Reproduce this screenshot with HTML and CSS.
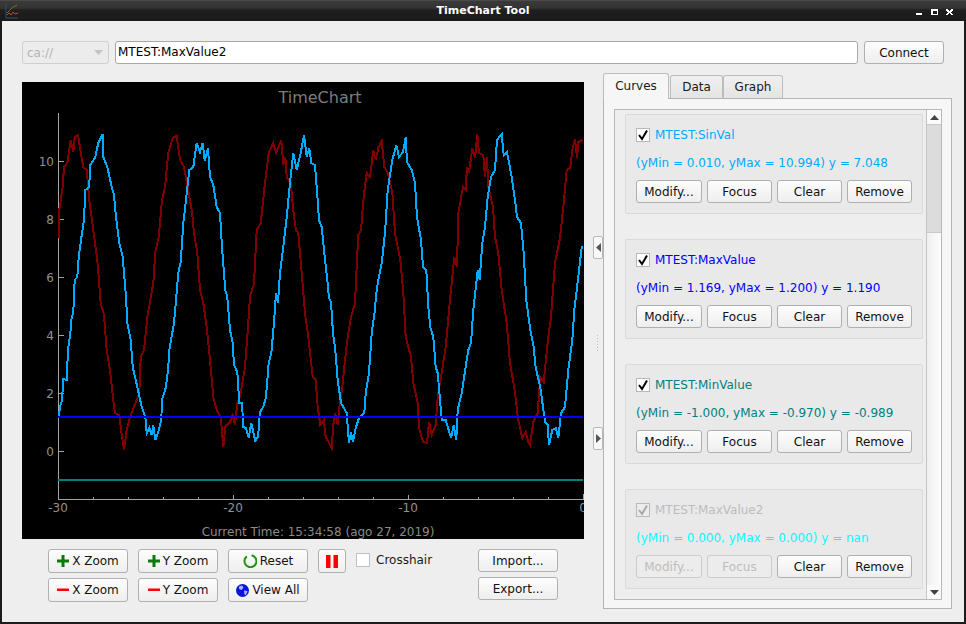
FILE: index.html
```html
<!DOCTYPE html>
<html lang="en">
<head>
<meta charset="utf-8">
<title>TimeChart Tool</title>
<link rel="stylesheet" href="styles.css">
</head>
<body>
<div class="window">
  <header class="titlebar">
    <div class="tb-left">
      <svg class="appicon" width="16" height="18" viewBox="0 0 16 18">
        <path d="M3 1V16H15" fill="none" stroke="#34506a" stroke-width="1"/>
        <path d="M4 11L7 8L10 5L14 3" fill="none" stroke="#7a6a30" stroke-width="1"/>
        <path d="M4 13L6 11L8 13L10 10L12 12L15 11" fill="none" stroke="#b0502a" stroke-width="1"/>
      </svg>
    </div>
    <div class="tb-title">TimeChart Tool</div>
    <div class="tb-right">
      <svg width="44" height="10" viewBox="0 0 44 10" shape-rendering="crispEdges">
        <path d="M0 7H6V9H0Z" fill="#fff"/>
        <path d="M15 3H22V9H15ZM16.500 5V8H20.500V5Z" fill="#fff" fill-rule="evenodd"/>
        <path d="M30 3H32V4H33V5H34V4H35V3H37V5H36V6H35V7H36V8H37V9H35V8H34V7H33V8H32V9H30V8H31V7H32V6H31V5H30Z" fill="#fff"/>
      </svg>
    </div>
  </header>
  <main class="content">
    <div class="toprow">
      <div class="combo"><span>ca://</span><svg width="9" height="5" viewBox="0 0 9 5"><path d="M0 0H9L4.500 5Z" fill="#c4c4c4"/></svg></div>
      <div class="lineedit">MTEST:MaxValue2</div>
      <button class="btn connect">Connect</button>
    </div>
    <div class="mainrow">
      <section class="leftcol">
        <svg class="chart" width="562" height="457" viewBox="22 82 562 457">
          <rect x="22" y="82" width="562" height="457" fill="#000"/>
          <text class="c-title" x="320" y="103" text-anchor="middle">TimeChart</text>
          <text class="c-foot" x="318" y="536" text-anchor="middle">Current Time: 15:34:58 (ago 27, 2019)</text>
          <g class="c-axis" shape-rendering="crispEdges">
            <path d="M58.500 113V499.500H584"/>
            <path d="M58 161.500H64M58 219.500H64M58 277.500H64M58 335.500H64M58 393.500H64M58 451.500H64"/>
            <path d="M93.500 497V499M128.500 497V499M163.500 497V499M198.500 497V499M233.500 495V499M268.500 497V499M303.500 497V499M338.500 497V499M373.500 497V499M408.500 495V499M443.500 497V499M478.500 497V499M513.500 497V499M548.500 497V499M583.500 494V499"/>
          </g>
          <g class="c-label" text-anchor="end">
            <text x="54" y="166">10</text>
            <text x="54" y="224">8</text>
            <text x="54" y="282">6</text>
            <text x="54" y="340">4</text>
            <text x="54" y="398">2</text>
            <text x="54" y="456">0</text>
          </g>
          <g class="c-label" text-anchor="middle">
            <text x="58" y="512">-30</text>
            <text x="233" y="512">-20</text>
            <text x="408" y="512">-10</text>
            <text x="583" y="512">0</text>
          </g>
          <g fill="none" stroke-width="2" shape-rendering="crispEdges">
            <polyline class="c-red" points="58.700,238 59.300,210 62.700,187 64,167 67.300,163 70.700,140 73.300,152 74.700,137 78,135 80.700,152 83.300,167 86.700,170 89.300,200 93.300,230 97.300,260 100.700,303 104,315 106.700,350 110,370 113.300,400 115,413 119.300,415 122,437 124,450 126.700,430 130,417 134,407 139.300,393 140.700,357 144,350 147.300,317 150,302 153.300,283 155.300,252 158.700,237 162,200 165,187 168.300,153 172.700,138 176.700,136 180,160 184,167 188.700,193 192,212 194,233 197.300,253 200,290 203.300,303 206.700,327 210,360 213.300,397 216.700,410 220.700,417 223.300,447 225.300,427 230,422 232.700,415 235,425 237.300,403 240,397 245,367 247.300,337 250,297 254,283 256.700,230 260.700,223 265,183 268.700,153 273.300,143 276,153 281.300,140 283.300,165 285.300,157 286.700,177 290.700,183 294,217 296,230 298.300,233 301.700,273 305,313 308.300,337 312.700,377 315.700,380 317.700,407 320.300,425 323.700,420 325.700,437 329,443 331.700,448 333.300,425 335,413 337.700,425 339,410 342.300,387 345,360 347.700,337 351,317 355,303 357,260 358.300,235 361,230 363.700,197 366.700,173 370,177 373.300,150 375.700,160 378.300,148 381.700,141 384.300,167 387.700,173 392.300,192 395,233 400.300,260 403.300,293 405.700,337 411,357 413.300,383 417.700,403 419,428 423,442 427,443 429,422 431.700,435 435.700,425 437.700,397 441.700,373 445.700,347 448.300,318 451,290 454.300,257 457,267 458.300,213 463,187 465.700,190 467,167 469,173 472.300,148 475,158 477.300,134 479,153 483.300,155 485,177 487,157 488.300,187 493,207 495,237 498.300,253 501.700,290 506.700,323 510,363 515,392 517.700,417 522.300,438 525.700,432 528.300,442 530,445 533.300,422 537.700,413 540.300,377 543.700,382 548.300,337 551,317 555,263 560,238 563.300,207 566.700,170 570.300,168 572.300,150 575,139 577,158 578.300,142 582.300,140"/>
            <polyline class="c-sky" points="58.700,416.700 60,407 62,400 63.300,379 66.700,380 68,350 70.700,330 71.300,320 73.300,312 74.700,280 77.300,277 78.700,257 82,233 84,220 85.300,190 89.300,187 90,165 95,158 98.300,143 102.700,134 103.300,157 107.300,167 111.700,187 114,195 116,217 119.300,243 122.700,257 126,297 127.300,323 130.700,340 132.700,367 137.300,387 141.700,407 145.300,417 146.700,433 149.300,428 151.700,435 153.300,425 155.300,440 158.300,432 161.300,420 162,400 166,387 168.300,367 169.300,350 174,323 176,300 178.300,273 180.700,262 183.300,223 186,200 189.300,170 193.300,167 196.700,143 200,152 202.700,143 204.700,161 208,148 210,177 213.300,185 216.700,207 220,213 222,247 225.300,290 227.300,297 230,330 232.700,343 234,365 237.300,372 239.300,403 242,403 243.300,427 246,428 248.700,438 251.300,423 255.300,441 258,437 260,412 263.300,407 266,397 268.700,363 271.300,353 274,323 276,293 278,303 280,273 283.300,247 286.700,217 290,183 293.300,153 296.700,170 300.700,153 304,135 306.700,157 309.300,148 311.300,163 315,165 317.700,200 319,220 321.700,227 324.300,253 327,277 329,298 331,302 333,333 335,347 337.700,380 341,403 346.700,413 349,443 351,432 353,442 355.700,428 359,418 364.300,413 365.700,393 369,373 371.700,333 375,310 376,295 378.300,280 381.700,263 385,233 387.700,190 392.300,160 396.300,145 399,157 403,152 405.700,137 407,162 411.700,170 415,183 417,217 421,240 423,267 426.300,270 428.300,307 430.300,327 433.300,337 435.700,367 437.700,373 441.700,420 445.700,420 451,438 453.700,425 456.300,440 457.700,410 461.700,393 466.700,360 468.300,350 471,343 473.300,310 477.700,270 479.700,280 482.300,243 485,227 487.700,197 491,177 495,170 497,140 501.700,134 503.700,155 507,152 511.700,177 515,200 517,217 521,223 523.700,253 526.300,300 530.300,330 533.700,347 535.700,368 540.300,387 545,422 547.700,425 549,445 552.300,430 555.700,428 558.300,438 561,413 565,407 568.300,370 572.300,340 574.300,310 578.300,277 581.700,247 583,247"/>
            <path class="c-blue" d="M58 416.500H583"/>
            <path class="c-teal" d="M58 480H583"/>
          </g>
        </svg>
        <div class="controls">
          <div class="zoomgrid">
            <button class="btn tool"><svg class="ic" width="12" height="12" viewBox="0 0 12 12"><path d="M4.500 0H7.500V4.500H12V7.500H7.500V12H4.500V7.500H0V4.500H4.500Z" fill="#0a7a0a"/></svg>X Zoom</button>
            <button class="btn tool"><svg class="ic" width="12" height="12" viewBox="0 0 12 12"><path d="M4.500 0H7.500V4.500H12V7.500H7.500V12H4.500V7.500H0V4.500H4.500Z" fill="#0a7a0a"/></svg>Y Zoom</button>
            <button class="btn tool"><svg class="ic" width="14" height="14" viewBox="0 0 14 14"><path d="M8.600 1.300A6 6 0 1 1 3.800 2.400" fill="none" stroke="#1c9414" stroke-width="2"/></svg>Reset</button>
            <button class="btn tool"><svg class="ic" width="12" height="12" viewBox="0 0 12 12"><path d="M0 4.500H12V7H0Z" fill="#f00"/></svg>X Zoom</button>
            <button class="btn tool"><svg class="ic" width="12" height="12" viewBox="0 0 12 12"><path d="M0 4.500H12V7H0Z" fill="#f00"/></svg>Y Zoom</button>
            <button class="btn tool"><svg class="ic" width="13" height="13" viewBox="0 0 13 13"><circle cx="6.500" cy="6.500" r="6.500" fill="#0a14e0"/><path d="M3 2.500L6 1.500L7.500 3.500L5.500 6L3 5ZM8 6.500L11.500 7L10 11L8.500 10.500Z" fill="#a8b4f4"/></svg>View All</button>
          </div>
          <button class="btn pause"><svg width="12" height="13" viewBox="0 0 12 13"><path d="M0 0H4.500V13H0ZM7.500 0H12V13H7.500Z" fill="#f00"/></svg></button>
          <label class="crosshair"><span class="box"></span>Crosshair</label>
          <div class="iogroup">
            <button class="btn io">Import...</button>
            <button class="btn io">Export...</button>
          </div>
        </div>
      </section>
      <div class="splitter">
        <div class="handle handle-a"><svg width="5" height="9" viewBox="0 0 5 9"><path d="M5 0V9L0 4.500Z" fill="#555"/></svg></div>
        <div class="grip"></div>
        <div class="handle handle-b"><svg width="5" height="9" viewBox="0 0 5 9"><path d="M0 0V9L5 4.500Z" fill="#555"/></svg></div>
      </div>
      <section class="rightcol">
        <div class="tabs">
          <div class="tab active">Curves</div>
          <div class="tab t-data">Data</div>
          <div class="tab t-graph">Graph</div>
        </div>
        <div class="pane">
          <div class="scrollarea">
            <div class="curvelist">
              <div class="curve">
                <div class="curvehead"><span class="box checked"><svg width="12" height="12" viewBox="0 0 12 12"><path d="M2 6L5 10L10 1.500" fill="none" stroke="#000" stroke-width="2"/></svg></span><span class="name sin">MTEST:SinVal</span></div>
                <div class="vals sin">(yMin = 0.010, yMax = 10.994) y = 7.048</div>
                <div class="actions"><button class="btn act">Modify...</button><button class="btn act">Focus</button><button class="btn act">Clear</button><button class="btn act">Remove</button></div>
              </div>
              <div class="curve">
                <div class="curvehead"><span class="box checked"><svg width="12" height="12" viewBox="0 0 12 12"><path d="M2 6L5 10L10 1.500" fill="none" stroke="#000" stroke-width="2"/></svg></span><span class="name max">MTEST:MaxValue</span></div>
                <div class="vals max">(yMin = 1.169, yMax = 1.200) y = 1.190</div>
                <div class="actions"><button class="btn act">Modify...</button><button class="btn act">Focus</button><button class="btn act">Clear</button><button class="btn act">Remove</button></div>
              </div>
              <div class="curve">
                <div class="curvehead"><span class="box checked"><svg width="12" height="12" viewBox="0 0 12 12"><path d="M2 6L5 10L10 1.500" fill="none" stroke="#000" stroke-width="2"/></svg></span><span class="name min">MTEST:MinValue</span></div>
                <div class="vals min">(yMin = -1.000, yMax = -0.970) y = -0.989</div>
                <div class="actions"><button class="btn act">Modify...</button><button class="btn act">Focus</button><button class="btn act">Clear</button><button class="btn act">Remove</button></div>
              </div>
              <div class="curve">
                <div class="curvehead"><span class="box checked off"><svg width="12" height="12" viewBox="0 0 12 12"><path d="M2 6L5 10L10 1.500" fill="none" stroke="#a8a8a8" stroke-width="2"/></svg></span><span class="name disabled">MTEST:MaxValue2</span></div>
                <div class="vals cyan">(yMin = 0.000, yMax = 0.000) y = nan</div>
                <div class="actions"><button class="btn act off">Modify...</button><button class="btn act off">Focus</button><button class="btn act">Clear</button><button class="btn act">Remove</button></div>
              </div>
            </div>
            <div class="scrollbar">
              <div class="sb-btn"><svg width="9" height="5" viewBox="0 0 9 5"><path d="M0 5H9L4.500 0Z" fill="#444"/></svg></div>
              <div class="sb-thumb"></div>
              <div class="sb-track"></div>
              <div class="sb-btn"><svg width="9" height="5" viewBox="0 0 9 5"><path d="M0 0H9L4.500 5Z" fill="#444"/></svg></div>
            </div>
          </div>
        </div>
      </section>
    </div>
  </main>
</div>
</body>
</html>
```
FILE: styles.css
```css
* { box-sizing: border-box; }
html, body { margin: 0; padding: 0; }
body { width: 966px; height: 624px; overflow: hidden; font-family: "DejaVu Sans", sans-serif; font-size: 12px; color: #1a1a1a; }
.window { width: 966px; height: 624px; display: flex; flex-direction: column; background: #1c1c1c; padding: 0 2px 2px; }
.titlebar { height: 21px; margin: 0 -2px; display: grid; grid-template-columns: 1fr auto 1fr; align-items: center; background: linear-gradient(#5a5a5a 0, #3a3a3a 1px, #333 8px, #1f1f1f 10px, #1a1a1a 21px); color: #fff; font-size: 11px; font-weight: bold; }
.tb-left { display: flex; padding-left: 3px; }
.tb-right { display: flex; justify-content: flex-end; padding-right: 6px; padding-top: 1px; }
.tb-title { position: relative; }
.content { flex: 1; background: #eeeeee; padding: 20px 12px 0 20px; display: flex; flex-direction: column; }
.toprow { display: flex; gap: 6px; height: 23px; margin-right: 8px; margin-bottom: 9px; }
.combo { width: 87px; border: 1px solid #cfcfcf; border-radius: 3px; background: #ececec; color: #b4b4b4; display: flex; align-items: center; justify-content: space-between; padding: 0 5px 0 4px; }
.lineedit { flex: 1; border: 1px solid #a8a8a8; border-radius: 3px; background: #fff; color: #000; padding: 0 2px; line-height: 21px; }
.btn { font: inherit; color: #111; padding: 0; border: 1px solid #b0b0b0; border-radius: 3px; background: linear-gradient(#fdfdfd, #eeeeee); display: flex; align-items: center; justify-content: center; }
.connect { width: 80px; }
.mainrow { display: flex; height: 536px; }
.leftcol { width: 562px; padding-top: 9px; display: flex; flex-direction: column; }
.chart { display: block; }
.c-title { font-size: 16px; fill: #7c7c7c; }
.c-foot { font-size: 12px; fill: #8a8a8a; }
.c-label { font-size: 12px; fill: #929292; }
.c-axis path { fill: none; stroke: #a4a4a4; stroke-width: 1; }
.c-red { stroke: #800000; }
.c-sky { stroke: #00aaff; }
.c-blue { stroke: #0000ff; }
.c-teal { stroke: #008080; }
.controls { display: flex; align-items: flex-start; margin-top: 10px; padding-left: 26px; padding-right: 26px; }
.zoomgrid { display: grid; grid-template-columns: repeat(3, 80px); grid-auto-rows: 24px; gap: 5px 10px; }
.tool { gap: 2px; }
.ic { flex: none; margin-right: 1px; }
.pause { width: 28px; height: 24px; margin-left: 10px; }
.crosshair { display: flex; align-items: center; gap: 6px; margin-left: 10px; margin-top: 4px; height: 13px; }
.box { display: flex; align-items: center; justify-content: center; flex: none; width: 14px; height: 14px; background: #fff; border: 1px solid #c2c2c2; }
.iogroup { margin-left: auto; display: flex; flex-direction: column; gap: 5px; }
.io { width: 80px; height: 23px; }
.splitter { width: 19px; display: flex; flex-direction: column; align-items: flex-end; padding-top: 163px; }
.handle { width: 10px; height: 23px; border: 1px solid #b8b8b8; border-radius: 2px; background: #f8f8f8; display: flex; align-items: center; justify-content: center; }
.grip { width: 1px; height: 16px; margin: 76px 5px 76px 0; background: repeating-linear-gradient(#bcbcbc 0, #bcbcbc 1px, transparent 1px, transparent 3px); }
.rightcol { width: 349px; display: flex; flex-direction: column; }
.tabs { display: flex; align-items: flex-end; height: 25px; position: relative; }
.tab { height: 23px; margin-left: 1px; border: 1px solid #bcbcbc; border-bottom: none; border-radius: 3px 3px 0 0; background: linear-gradient(#f0f0f0, #e4e4e4); display: flex; align-items: center; justify-content: center; }
.tab.active { width: 66px; height: 26px; margin-left: 0; margin-bottom: -1px; background: #f6f6f6; position: relative; z-index: 1; padding-bottom: 2px; }
.t-data { width: 53px; margin-left: 1px; }
.t-graph { width: 60px; margin-left: 0; }
.pane { height: 511px; border: 1px solid #b4b4b4; background: #f6f6f6; padding: 10px 9px 9px 10px; }
.scrollarea { height: 491px; border: 1px solid #b8b8b8; background: #eeeeee; display: flex; }
.curvelist { flex: 1; padding: 4px 0 0 10px; display: flex; flex-direction: column; gap: 25px; }
.curve { width: 298px; height: 100px; flex: none; background: #e9e9e9; border: 1px solid #dadada; border-radius: 2px; padding: 13px 10px 0; display: flex; flex-direction: column; }
.curvehead { display: flex; align-items: center; gap: 5px; height: 14px; }
.box.off { background: #ececec; border-color: #b4b4b4; }
.box.checked { border-color: #b8b8b8; }
.name.sin, .vals.sin { color: #00aaff; }
.name.max, .vals.max { color: #0000ff; }
.name.min, .vals.min { color: #008080; }
.name.disabled { color: #bdbdbd; }
.vals.cyan { color: #00ffff; }
.vals { margin-top: 14px; height: 15px; line-height: 15px; }
.actions { display: flex; gap: 5px; margin-top: 9px; }
.act { width: 65px; height: 23px; }
.act:first-child { width: 66px; }
.act.off { color: #bdbdbd; border-color: #cccccc; background: #ececec; }
.scrollbar { width: 15px; flex: none; border-left: 1px solid #c4c4c4; display: flex; flex-direction: column; background: linear-gradient(90deg, #efefef, #fdfdfd); }
.sb-btn { height: 14px; flex: none; display: flex; align-items: center; justify-content: center; background: #fbfbfb; }
.sb-thumb { height: 109px; flex: none; background: #dcdcdc; border-top: 1px solid #c8c8c8; border-bottom: 1px solid #c8c8c8; }
.sb-track { flex: 1; }
```
